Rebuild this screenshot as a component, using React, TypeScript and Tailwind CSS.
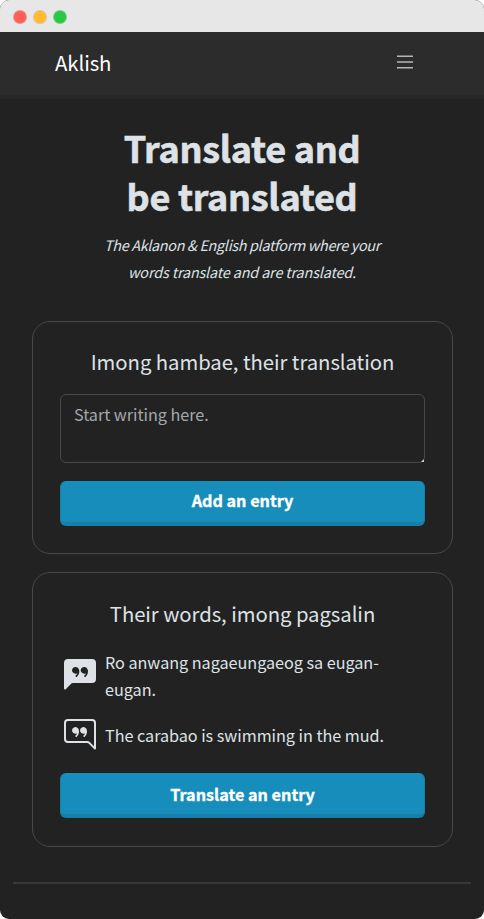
import { BsChatLeftQuoteFill, BsChatRightQuote } from "react-icons/bs";
import type { ReactNode } from "react";

function TitleBar() {
  return (
    <div className="flex h-8 items-center gap-2 bg-[#e7e7e7] px-[14px] pt-[2px]">
      <span className="size-3 rounded-full bg-[#ff5f57] ring-1 ring-[#e2463f]/50" />
      <span className="size-3 rounded-full bg-[#febc2e] ring-1 ring-[#e0a03a]/50" />
      <span className="size-3 rounded-full bg-[#28c840] ring-1 ring-[#1aab37]/50" />
    </div>
  );
}

function Navbar() {
  return (
    <nav className="flex h-[67px] items-center justify-between border-b-4 border-[#282828] bg-[#2c2c2c] pr-[71px] pb-[3px] pl-[55px]">
      <a className="text-[20.4px] leading-8 tracking-[-0.1px] text-white">Aklish</a>
      <svg viewBox="0 0 16 14" className="h-[14px] w-4" stroke="#b5b5b5" strokeWidth="1.4">
        <path d="M0 1.3h16M0 7h16M0 12.8h16" />
      </svg>
    </nav>
  );
}

function Card({ title, className, children }: { title: string; className: string; children: ReactNode }) {
  return (
    <section className={`flex flex-col rounded-[18px] border border-[#484848] px-[27px] ${className}`}>
      <h2 className="text-center text-[20.3px] leading-7 tracking-[-0.05px] whitespace-nowrap">{title}</h2>
      {children}
    </section>
  );
}

function Action({ children, className }: { children: ReactNode; className: string }) {
  return (
    <button
      className={`h-[45px] shrink-0 rounded-[6px] border border-b-4 border-[#167fa9] border-t-[#178dbc] bg-[#178dbc] text-[16.2px] leading-6 font-bold text-white [-webkit-text-stroke:0.3px] ${className}`}
    >
      {children}
    </button>
  );
}

export default function App() {
  return (
    <div className="h-[919px] bg-white font-['Noto_Sans_CJK_SC',sans-serif] text-[#dee2e6]">
      <div className="h-full overflow-hidden rounded-[9px] bg-[#222222]">
        <TitleBar />
        <Navbar />
        <main className="px-[13px]">
          <header className="flex flex-col items-center pt-[24px] text-center">
            <h1 className="text-[36px] leading-[48px] font-bold tracking-[-0.3px] [-webkit-text-stroke:0.6px]">
              Translate and
              <br />
              be translated
            </h1>
            <p className="mt-[12px] text-[14.4px] leading-[27px] tracking-[-0.32px] whitespace-nowrap italic">
              The Aklanon &amp; English platform where your
              <br />
              <span className="tracking-[-0.15px]">words translate and are translated.</span>
            </p>
          </header>
          <div className="mt-[36px] flex flex-col gap-[18px] pr-[18px] pl-[19px]">
            <Card title="Imong hambae, their translation" className="h-[233px] pt-[25px]">
              <div className="relative mt-[19px] flex">
                <textarea
                  placeholder="Start writing here."
                  className="h-[69px] w-full resize-none rounded-[6px] border border-[#484848] px-[13px] py-[6px] text-[16.2px] leading-[27px] tracking-[-0.03px] placeholder:text-[#a5a8ab]"
                />
                <svg viewBox="0 0 3 3" className="absolute right-[1px] bottom-[1px] size-[3px]">
                  <path d="M0 3L3 0V3Z" fill="#cccccc" />
                </svg>
              </div>
              <Action className="mt-[18px] pb-[5px]">Add an entry</Action>
            </Card>
            <Card title="Their words, imong pagsalin" className="h-[275px] pt-[26px]">
              <div className="mt-[22px] flex items-center gap-[9px] pl-[4px] text-[16.2px] leading-[27px] tracking-[-0.03px]">
                <BsChatLeftQuoteFill className="mb-[2px] size-8 shrink-0" />
                <p>
                  Ro anwang nagaeungaeog sa eugan-
                  <br />
                  eugan.
                </p>
              </div>
              <div className="mt-[16px] flex items-center gap-[9px] pl-[4px] text-[16.2px] leading-[27px] tracking-[-0.03px]">
                <BsChatRightQuote className="size-8 shrink-0" />
                <p>The carabao is swimming in the mud.</p>
              </div>
              <Action className="mt-[22px] pb-[1px]">Translate an entry</Action>
            </Card>
          </div>
          <hr className="mt-[35px] border-t-2 border-[#383838]" />
        </main>
      </div>
    </div>
  );
}
